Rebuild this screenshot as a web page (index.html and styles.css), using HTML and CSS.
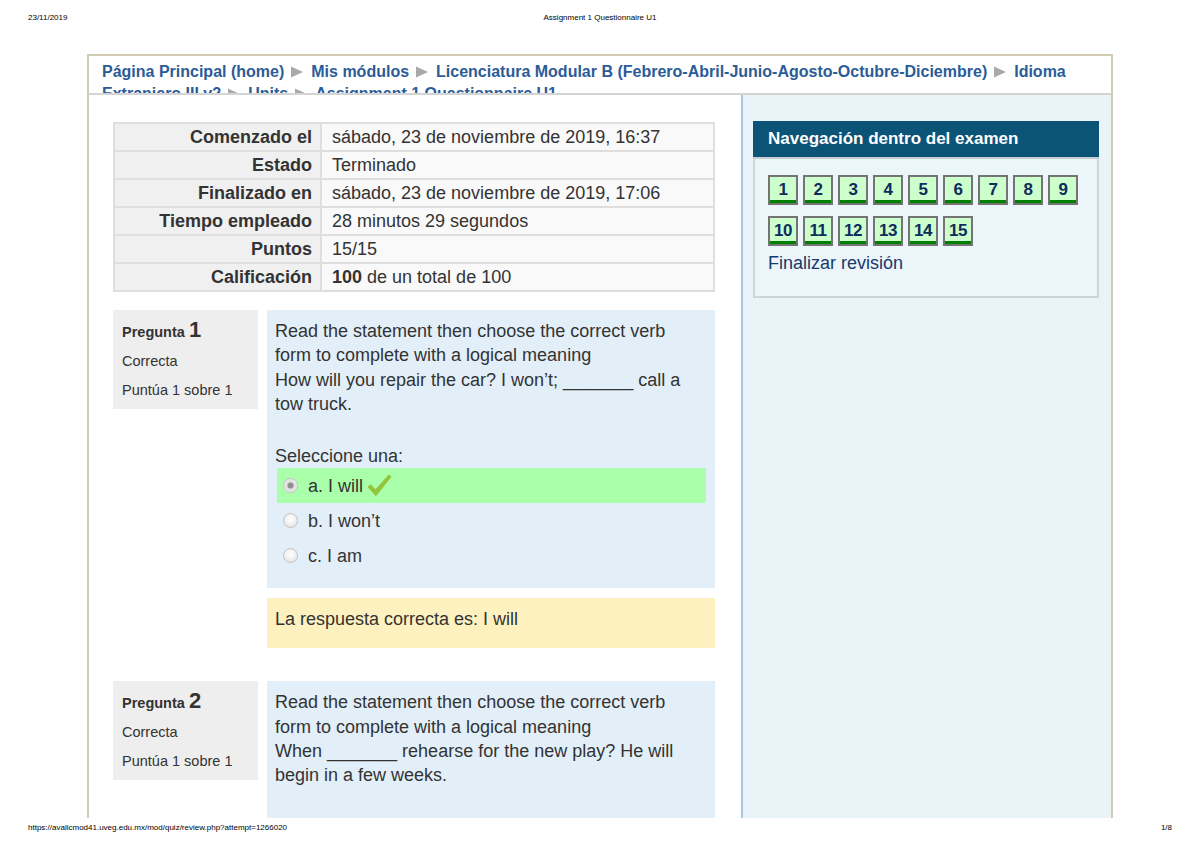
FILE: index.html
```html
<!DOCTYPE html>
<html lang="es">
<head>
<meta charset="utf-8">
<title>Assignment 1 Questionnaire U1</title>
<link rel="stylesheet" href="styles.css">
</head>
<body>
<div class="page">
  <header class="print-head">
    <span class="ph-left">23/11/2019</span>
    <span class="ph-center">Assignment 1 Questionnaire U1</span>
    <span class="ph-right"></span>
  </header>

  <div class="frame">
    <nav class="crumbs">
      <a href="#">Página Principal (home)</a><span class="sep"><svg viewBox="0 0 12 12" width="12" height="12"><polygon points="0,0.5 12,6 0,11.5" fill="#a9a9a9"/></svg></span><a href="#">Mis módulos</a><span class="sep"><svg viewBox="0 0 12 12" width="12" height="12"><polygon points="0,0.5 12,6 0,11.5" fill="#a9a9a9"/></svg></span><a href="#">Licenciatura Modular B (Febrero-Abril-Junio-Agosto-Octubre-Diciembre)</a><span class="sep"><svg viewBox="0 0 12 12" width="12" height="12"><polygon points="0,0.5 12,6 0,11.5" fill="#a9a9a9"/></svg></span><a href="#">Idioma Extranjero III v2</a><span class="sep"><svg viewBox="0 0 12 12" width="12" height="12"><polygon points="0,0.5 12,6 0,11.5" fill="#a9a9a9"/></svg></span><a href="#">Units</a><span class="sep"><svg viewBox="0 0 12 12" width="12" height="12"><polygon points="0,0.5 12,6 0,11.5" fill="#a9a9a9"/></svg></span><a href="#">Assignment 1 Questionnaire U1</a>
    </nav>

    <div class="columns">
      <main class="main">
        <table class="summary">
          <colgroup><col class="c1"><col class="c2"></colgroup>
          <tbody>
            <tr><th>Comenzado el</th><td>sábado, 23 de noviembre de 2019, 16:37</td></tr>
            <tr><th>Estado</th><td>Terminado</td></tr>
            <tr><th>Finalizado en</th><td>sábado, 23 de noviembre de 2019, 17:06</td></tr>
            <tr><th>Tiempo empleado</th><td>28 minutos 29 segundos</td></tr>
            <tr><th>Puntos</th><td>15/15</td></tr>
            <tr><th>Calificación</th><td><b>100</b> de un total de 100</td></tr>
          </tbody>
        </table>

        <div class="que">
          <div class="info">
            <h3>Pregunta <span class="qno">1</span></h3>
            <div class="state">Correcta</div>
            <div class="grade">Puntúa 1 sobre 1</div>
          </div>
          <div class="content">
            <div class="formulation">
              <div class="qtext">Read the statement then choose the correct verb<br>form to complete with a logical meaning<br>How will you repair the car? I won’t; _______ call a<br>tow truck.</div>
              <div class="prompt">Seleccione una:</div>
              <div class="answer">
                <div class="opt correct"><span class="radio checked"></span><span>a. I will</span><svg class="tick" viewBox="0 0 24 22" width="25" height="23"><path d="M0.5 12.5 L3.5 9.8 L8.2 14.6 L21 0.5 L23.5 2.6 L8.6 21.2 Z" fill="#93c43b"/></svg></div>
                <div class="opt"><span class="radio"></span><span>b. I won’t</span></div>
                <div class="opt"><span class="radio"></span><span>c. I am</span></div>
              </div>
            </div>
            <div class="outcome">La respuesta correcta es: I will</div>
          </div>
        </div>

        <div class="que">
          <div class="info">
            <h3>Pregunta <span class="qno">2</span></h3>
            <div class="state">Correcta</div>
            <div class="grade">Puntúa 1 sobre 1</div>
          </div>
          <div class="content">
            <div class="formulation">
              <div class="qtext">Read the statement then choose the correct verb<br>form to complete with a logical meaning<br>When _______ rehearse for the new play? He will<br>begin in a few weeks.</div>
              <div class="prompt">Seleccione una:</div>
              <div class="answer">
                <div class="opt correct"><span class="radio checked"></span><span>a. will he</span></div>
                <div class="opt"><span class="radio"></span><span>b. he will</span></div>
                <div class="opt"><span class="radio"></span><span>c. is he</span></div>
              </div>
            </div>
          </div>
        </div>
      </main>

      <aside class="side">
        <div class="navblock">
          <div class="navhead">Navegación dentro del examen</div>
          <div class="navbody">
            <div class="buttons">
              <a class="qbtn" href="#">1</a><a class="qbtn" href="#">2</a><a class="qbtn" href="#">3</a><a class="qbtn" href="#">4</a><a class="qbtn" href="#">5</a><a class="qbtn" href="#">6</a><a class="qbtn" href="#">7</a><a class="qbtn" href="#">8</a><a class="qbtn" href="#">9</a><a class="qbtn" href="#">10</a><a class="qbtn" href="#">11</a><a class="qbtn" href="#">12</a><a class="qbtn" href="#">13</a><a class="qbtn" href="#">14</a><a class="qbtn" href="#">15</a>
            </div>
            <a class="finish" href="#">Finalizar revisión</a>
          </div>
        </div>
      </aside>
    </div>
  </div>

  <footer class="print-foot">
    <span>https://avalicmod41.uveg.edu.mx/mod/quiz/review.php?attempt=1266020</span>
    <span>1/8</span>
  </footer>
</div>
</body>
</html>
```

FILE: styles.css
```css
* { box-sizing: border-box; }

body {
  margin: 0;
  background: #fff;
  font-family: "Liberation Sans", Arial, sans-serif;
  color: #333;
}

.page {
  width: 1200px;
  height: 848px;
  overflow: hidden;
}

/* print header / footer */
.print-head {
  height: 54px;
  display: grid;
  grid-template-columns: 1fr auto 1fr;
  padding: 13px 28px 0;
  font-size: 8px;
  line-height: 10px;
  color: #000;
}
.ph-center { text-align: center; }

.print-foot {
  height: 30px;
  display: flex;
  justify-content: space-between;
  padding: 5px 28px 0;
  font-size: 8px;
  line-height: 10px;
  color: #000;
}

/* frame */
.frame {
  margin-left: 87px;
  width: 1026px;
  height: 764px;
  border: 2px solid #d2cbb4;
  border-bottom: 0;
  overflow: hidden;
  display: flex;
  flex-direction: column;
}

.crumbs {
  flex: none;
  height: 39px;
  padding: 5px 12px 0 13px;
  border-bottom: 2px solid #d4d4d4;
  font-size: 16px;
  font-weight: bold;
  line-height: 22px;
  overflow: hidden;
}
.crumbs a { color: #2b5c98; text-decoration: none; }
.crumbs .sep { display: inline-block; margin: 0 8px 0 7px; }
.crumbs .sep svg { display: inline-block; vertical-align: -1px; }

.columns {
  flex: 1;
  display: flex;
  min-height: 0;
}

.main {
  flex: 0 0 652px;
  padding: 27px 0 0 24px;
}

.side {
  flex: 1;
  border-left: 2px solid #a5c7e3;
  background: #eaf4f8;
  padding: 26px 12px 0 10px;
}

/* summary table */
.summary {
  width: 600px;
  border-collapse: collapse;
  table-layout: fixed;
}
.summary .c1 { width: 207px; }
.summary .c2 { width: 393px; }
.summary th,
.summary td {
  border: 2px solid #dedede;
  font-size: 18px;
  line-height: 20px;
  color: #333;
  white-space: nowrap;
}
.summary th {
  text-align: right;
  background: #f0f0f0;
  padding: 3px 8px;
}
.summary td {
  text-align: left;
  background: #f9f9f9;
  padding: 3px 10px;
  font-weight: normal;
}

/* questions */
.que {
  display: flex;
  gap: 9px;
  margin-top: 18px;
}
.que + .que { margin-top: 33px; }

.info {
  flex: 0 0 145px;
  align-self: flex-start;
  background: #eeeeee;
  padding: 8px 9px 9px;
  font-size: 14.5px;
  color: #333;
}
.info h3 {
  margin: 0;
  font-size: 14.5px;
  line-height: 24px;
  font-weight: bold;
}
.info .qno { font-size: 22px; }
.info .state { margin-top: 7px; line-height: 20px; }
.info .grade { margin-top: 9px; line-height: 20px; }

.content { flex: 0 0 448px; }

.formulation {
  background: #e2eff9;
  padding: 9px 9px 15px 8px;
  font-size: 18px;
  line-height: 24.3px;
  color: #333;
}
.qtext { margin-bottom: 28px; }

.answer { margin-left: 2px; }
.opt {
  height: 35px;
  display: flex;
  align-items: center;
  padding-left: 6px;
}
.opt.correct { background: #aaffaa; }
.radio {
  width: 15px;
  height: 15px;
  border-radius: 50%;
  border: 1px solid #c2c2c2;
  background: radial-gradient(circle at 50% 40%, #ffffff 0, #f2f2f2 45%, #dcdcdc 100%);
  margin-right: 10px;
  flex: none;
}
.radio.checked {
  background: radial-gradient(circle at 50% 50%, #8e8e8e 0, #8e8e8e 2.6px, #dadada 3.4px, #f4f4f4 7.5px);
}
.tick { margin-left: 4px; margin-top: -1px; }

.outcome {
  margin-top: 10px;
  background: #fdf2bf;
  padding: 9px 8px 17px;
  font-size: 18px;
  line-height: 24px;
  color: #333;
}

/* navigation block */
.navhead {
  height: 38px;
  background: #0b5478;
  color: #fff;
  font-weight: bold;
  font-size: 17px;
  line-height: 36px;
  padding-left: 15px;
  border-bottom: 2px solid #c9cdd0;
}
.navbody {
  background: #ecf5f9;
  border: 2px solid #cfd4d6;
  border-top: 0;
  padding: 16px 13px 21px;
}
.buttons {
  display: flex;
  flex-wrap: wrap;
  gap: 11px 5px;
}
.qbtn {
  width: 30px;
  height: 30px;
  border: 2px solid #747474;
  background: #ccffcc;
  box-shadow: inset 0 -3px 0 #008000;
  font-weight: bold;
  font-size: 17px;
  line-height: 25px;
  color: #0e2d5c;
  text-align: center;
  text-decoration: none;
  letter-spacing: -0.5px;
}
.finish {
  display: block;
  margin-top: 5px;
  font-size: 18px;
  line-height: 24px;
  color: #173a6c;
  text-decoration: none;
}
```
